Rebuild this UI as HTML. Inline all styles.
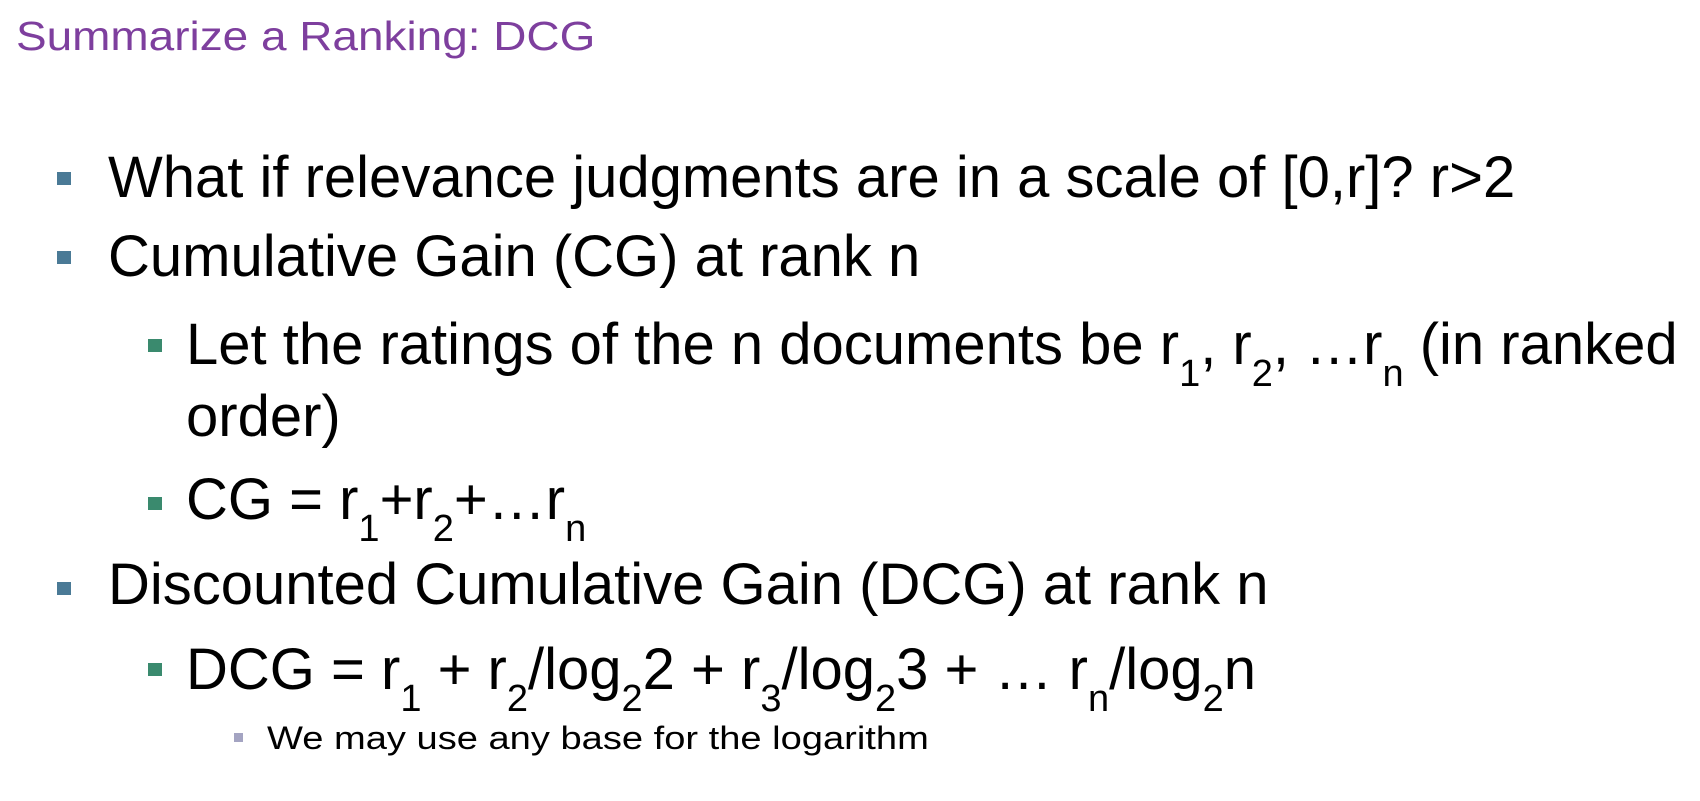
<!DOCTYPE html>
<html><head><meta charset="utf-8"><style>
html,body{margin:0;padding:0;background:#fff;}
body{width:1700px;height:801px;position:relative;overflow:hidden;font-family:"Liberation Sans",Arial,sans-serif;color:#000;}
.t{position:absolute;white-space:nowrap;line-height:1;}
.l{font-size:58px;}
.s{font-size:38px;vertical-align:-22px;line-height:1;}
.b{position:absolute;}
.b1{width:14px;height:13px;background:#4a7a96;}
.b2{width:14px;height:13px;background:#3a8a6e;}
.b3{width:9px;height:9px;background:#a4a4c2;}
</style></head><body>
<div class="t" style="left:16px;top:16px;font-size:41px;color:#7e3f9e;transform:scaleX(1.12);transform-origin:left top;">Summarize a Ranking: DCG</div>

<div class="b b1" style="left:57px;top:172px"></div>
<div class="t l" style="left:108px;top:149px">What if relevance judgments are in a scale of [0,r]? r&gt;2</div>

<div class="b b1" style="left:57px;top:251px"></div>
<div class="t l" style="left:108px;top:228px">Cumulative Gain (CG) at rank n</div>

<div class="b b2" style="left:148px;top:339px"></div>
<div class="t l" style="left:186px;top:316px">Let the ratings of the n documents be r<span class="s">1</span>, r<span class="s">2</span>, …r<span class="s">n</span> (in ranked</div>
<div class="t l" style="left:186px;top:388px">order)</div>

<div class="b b2" style="left:148px;top:497px"></div>
<div class="t l" style="left:186px;top:471px">CG = r<span class="s">1</span>+r<span class="s">2</span>+…r<span class="s">n</span></div>

<div class="b b1" style="left:57px;top:582px"></div>
<div class="t l" style="left:108px;top:556px">Discounted Cumulative Gain (DCG) at rank n</div>

<div class="b b2" style="left:148px;top:663px"></div>
<div class="t l" style="left:186px;top:641px">DCG = r<span class="s">1</span> + r<span class="s">2</span>/log<span class="s">2</span>2 + r<span class="s">3</span>/log<span class="s">2</span>3 + … r<span class="s">n</span>/log<span class="s">2</span>n</div>

<div class="b b3" style="left:234px;top:733px"></div>
<div class="t" style="left:267px;top:722px;font-size:32px;transform:scaleX(1.19);transform-origin:left top;">We may use any base for the logarithm</div>
</body></html>
